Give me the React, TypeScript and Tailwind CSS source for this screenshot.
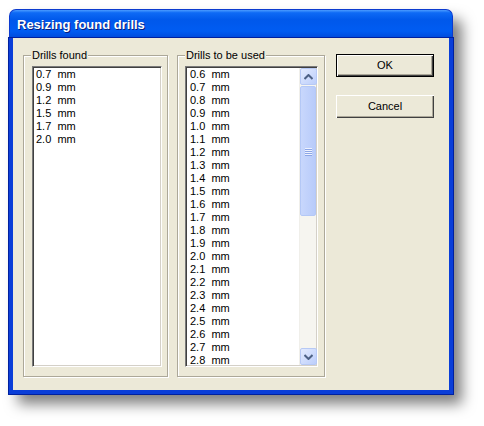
import React from "react";

const found = ["0.7", "0.9", "1.2", "1.5", "1.7", "2.0"];
const used = Array.from({ length: 23 }, (_, i) => (0.6 + i * 0.1).toFixed(1));

function Row({ v }: { v: string }) {
  return (
    <div className="h-[13px] leading-[13px] pl-[2px] whitespace-pre text-black">
      {v + "  mm"}
    </div>
  );
}

function Chevron({ up }: { up?: boolean }) {
  return (
    <svg width="9" height="6" viewBox="0 0 9 6" className={up ? "" : "rotate-180"}>
      <path d="M0.5 5 L4.5 1 L8.5 5" fill="none" stroke="#4D6185" strokeWidth="2" />
    </svg>
  );
}

function ScrollBtn({ up }: { up?: boolean }) {
  return (
    <div className="h-[17px] w-[17px] rounded-[2px] border border-[#B7C9F5] bg-[linear-gradient(135deg,#E3EBFE,#BCCEFB)] flex items-center justify-center">
      <Chevron up={up} />
    </div>
  );
}

function Group({ label, className, children }: { label: string; className: string; children: React.ReactNode }) {
  return (
    <div className={"relative border border-[#ACA899] shadow-[inset_1px_1px_0_#fff,1px_1px_0_#fff] " + className}>
      <div className="absolute left-[7px] -top-[7px] bg-[#ECE9D8] px-[1px] leading-[13px] text-[11px] text-black">
        {label}
      </div>
      {children}
    </div>
  );
}

function Button({ label, def }: { label: string; def?: boolean }) {
  return (
    <div
      className={
        "h-[23px] w-[98px] flex items-center justify-center text-[11px] text-black bg-[#ECE9D8] " +
        (def
          ? "border border-black shadow-[inset_1px_1px_0_#fff,inset_-1px_-1px_0_#404040,inset_-2px_-2px_0_#ACA899]"
          : "shadow-[inset_1px_1px_0_#fff,inset_-1px_-1px_0_#404040,inset_-2px_-2px_0_#ACA899]")
      }
    >
      {label}
    </div>
  );
}

export default function App() {
  return (
    <div
      className="w-[484px] h-[426px] bg-white pt-[9px] pl-[9px]"
      style={{ fontFamily: '"Liberation Sans", Arial, sans-serif' }}
    >
      <div className="w-[444px] h-[385px] flex flex-col rounded-t-[7px] shadow-[9px_10px_14px_rgba(0,0,0,0.5)]">
        <div className="h-[29px] shrink-0 rounded-t-[7px] bg-[linear-gradient(180deg,#4A9BFF_0%,#0E6AF5_10%,#0058EB_35%,#005CF2_75%,#004ADB_100%)] flex items-center pl-[7px] pt-[1px] border-x border-t border-[#0B3ACF]">
          <span className="text-white font-bold text-[13px] [text-shadow:1px_1px_0_#0A1E7A]">
            Resizing found drills
          </span>
        </div>
        <div className="flex-1 bg-[#ECE9D8] border-x-4 border-b-4 border-[#0A3ED8] shadow-[0_0_0_1px_#00209F] flex pl-[10px] pt-[17px] pb-[13px] text-[11px]">
          <Group label="Drills found" className="w-[145px] h-[322px] pl-[8px] pt-[10px] pr-[5px] pb-[9px] flex">
            <div className="flex-1 bg-white border border-t-[#7A7A7A] border-l-[#7A7A7A] border-r-white border-b-white shadow-[inset_1px_1px_0_#404040,inset_-1px_-1px_0_#D4D0C8] pt-[1px] pl-[1px]">
              {found.map((v) => (
                <Row key={v} v={v} />
              ))}
            </div>
          </Group>
          <Group label="Drills to be used" className="ml-[9px] w-[148px] h-[322px] pl-[7px] pt-[10px] pr-[6px] pb-[9px] flex">
            <div className="flex-1 bg-white border border-t-[#7A7A7A] border-l-[#7A7A7A] border-r-white border-b-white shadow-[inset_1px_1px_0_#404040,inset_-1px_-1px_0_#D4D0C8] p-[1px] flex overflow-hidden">
              <div className="flex-1 pl-[1px]">
                {used.map((v) => (
                  <Row key={v} v={v} />
                ))}
              </div>
              <div className="w-[17px] flex flex-col bg-[#F6F5F0] border-l border-[#F0EFEA]">
                <ScrollBtn up />
                <div className="flex-1 flex flex-col pt-[1px]">
                  <div className="h-[130px] rounded-[2px] border border-[#B4C8F6] bg-[linear-gradient(90deg,#C8D7FC,#B8CBFA)] flex items-center justify-center">
                    <div className="flex flex-col gap-[1px]">
                      <div className="w-[7px] h-[1px] bg-[#EEF2FE] shadow-[0_1px_0_#8CA6E6]" />
                      <div className="w-[7px] h-[1px] bg-[#EEF2FE] shadow-[0_1px_0_#8CA6E6]" />
                      <div className="w-[7px] h-[1px] bg-[#EEF2FE] shadow-[0_1px_0_#8CA6E6]" />
                      <div className="w-[7px] h-[1px] bg-[#EEF2FE] shadow-[0_1px_0_#8CA6E6]" />
                    </div>
                  </div>
                </div>
                <ScrollBtn />
              </div>
            </div>
          </Group>
          <div className="ml-[11px] -mt-[1px] flex flex-col gap-[18px]">
            <Button label="OK" def />
            <Button label="Cancel" />
          </div>
        </div>
      </div>
    </div>
  );
}
